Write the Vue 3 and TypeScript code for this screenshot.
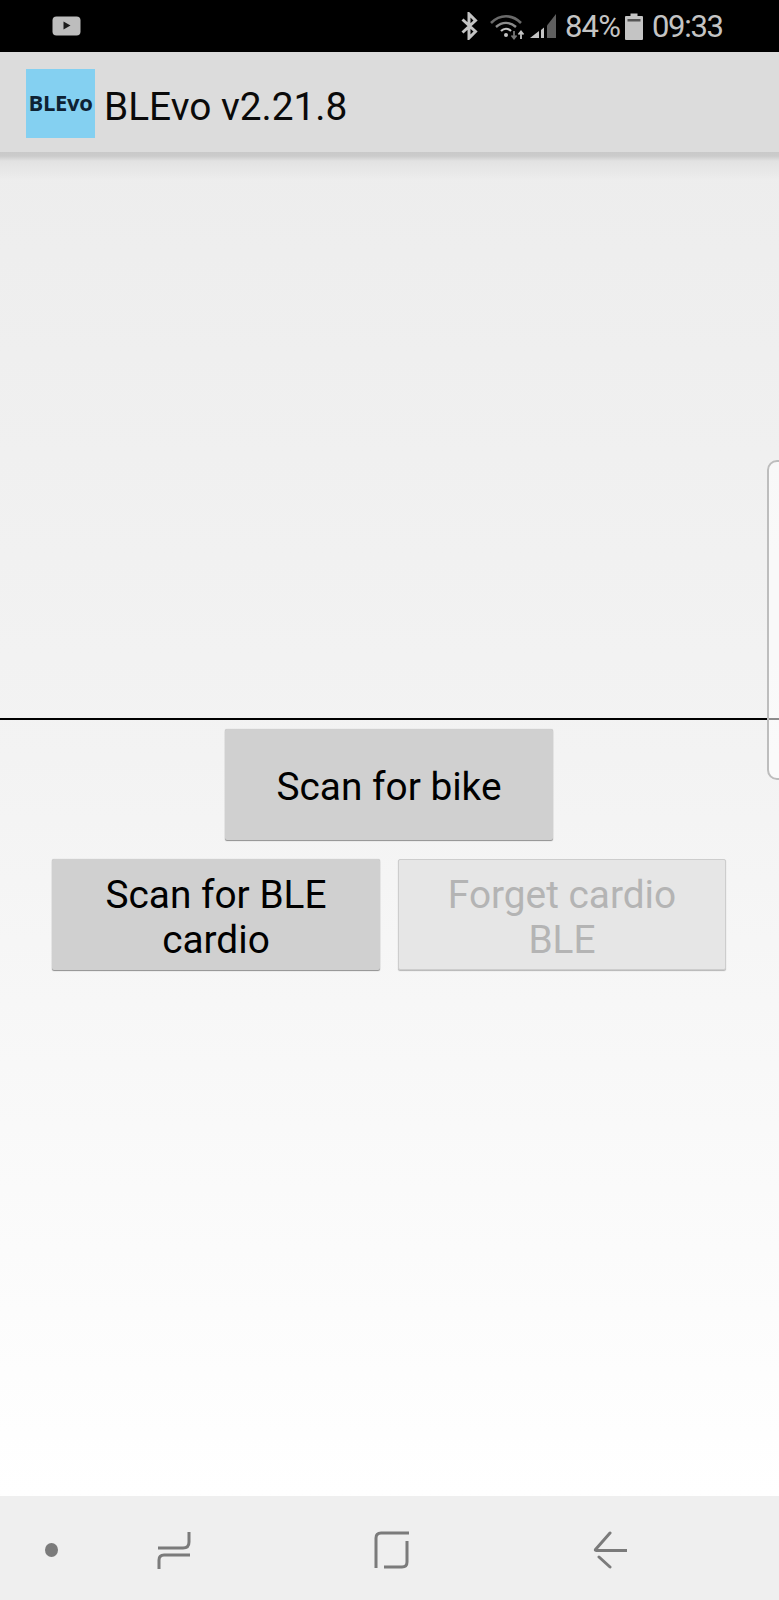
<template>
  <div class="screen">
    <div class="status-bar">
      <svg class="yt" width="29" height="20" viewBox="0 0 29 20">
        <rect width="28" height="19" x="0.5" y="0.5" rx="4" fill="#bdbdbd" />
        <path d="M11.5 5.5 L18.5 9.5 L11.5 13.5 Z" fill="#1c1c1c" />
      </svg>
      <div class="status-right">
        <svg class="bt" width="19" height="28" viewBox="0 0 18 28">
          <path d="M2 7.5 L15 19.5 L8.5 26 V2 L15 8.5 L2 20.5" fill="none" stroke="#c4c4c4" stroke-width="3" />
        </svg>
        <svg class="wifi" width="36" height="28" viewBox="0 0 36 28">
          <path d="M1 11 C10 2 22 2 31 11" fill="none" stroke="#6a6a6a" stroke-width="2.6" />
          <path d="M6 15 C12 9.5 20 9.5 26 15" fill="none" stroke="#8c8c8c" stroke-width="2.4" />
          <path d="M11 19 C14 16 18 16 21 19" fill="none" stroke="#c4c4c4" stroke-width="2.2" />
          <circle cx="16" cy="23" r="2" fill="#c4c4c4" />
          <path d="M24 19 V26 M21.5 23.5 L24 26.5 L26.5 23.5" fill="none" stroke="#777" stroke-width="1.8" />
          <path d="M31 27 V20 M28.5 22.5 L31 19.5 L33.5 22.5" fill="none" stroke="#c4c4c4" stroke-width="1.8" />
        </svg>
        <svg class="signal" width="27" height="27" viewBox="0 0 27 27">
          <path d="M0 26 L9 19 V26 Z" fill="#c4c4c4" />
          <path d="M11 18 L14 15.5 V26 H11 Z" fill="#c4c4c4" />
          <path d="M17 13.5 L26 2 V26 H17 Z" fill="#5f5f5f" />
        </svg>
        <span class="pct">84%</span>
        <svg class="battery" width="18" height="27" viewBox="0 0 18 27">
          <path d="M5.5 0.5 H12.5 V3 H17 Q18 3 18 4 V26 Q18 27 17 27 H1 Q0 27 0 26 V4 Q0 3 1 3 H5.5 Z" fill="#c4c4c4" />
          <rect x="2.5" y="6" width="13" height="2.5" fill="#555" />
        </svg>
        <span class="time">09:33</span>
      </div>
    </div>

    <header class="app-bar">
      <div class="logo">BLEvo</div>
      <span class="title">{{ title }}</span>
    </header>

    <main class="content">
      <div class="graph-area"></div>
      <div class="divider"></div>
      <div class="buttons">
        <button class="btn" type="button">Scan for bike</button>
        <div class="btn-row">
          <button class="btn" type="button">Scan for BLE cardio</button>
          <button class="btn" type="button" disabled>Forget cardio BLE</button>
        </div>
      </div>
      <div class="edge-handle"></div>
    </main>

    <nav class="nav-bar">
      <span class="dot"></span>
      <svg class="recent" width="34" height="38" viewBox="0 0 34 38">
        <path d="M1 17 H26 Q32 17 32 11 V1" fill="none" stroke="#7b7b7b" stroke-width="3" />
        <path d="M33 24 H7 Q2 24 2 29 V38" fill="none" stroke="#7b7b7b" stroke-width="3" />
      </svg>
      <svg class="home" width="36" height="38" viewBox="0 0 36 38">
        <path d="M35 2 H7 Q2 2 2 7 V37" fill="none" stroke="#7b7b7b" stroke-width="3" />
        <path d="M33 10 V31 Q33 36 28 36 H10" fill="none" stroke="#7b7b7b" stroke-width="3" />
      </svg>
      <svg class="back" width="34" height="38" viewBox="0 0 34 38">
        <path d="M17 2 L2.5 18.5 Q2 19.5 3.5 19.5 H33.5" fill="none" stroke="#7b7b7b" stroke-width="3" stroke-linecap="round" stroke-linejoin="round" />
        <path d="M6 26 L17 36" fill="none" stroke="#7b7b7b" stroke-width="3" stroke-linecap="round" />
      </svg>
    </nav>
  </div>
</template>

<script setup lang="ts">
const title = 'BLEvo v2.21.8'
</script>

<style>
html,
body {
  margin: 0;
  background: #fff;
}
</style>

<style scoped>
.screen {
  width: 779px;
  height: 1600px;
  display: flex;
  flex-direction: column;
  font-family: Roboto, "Liberation Sans", sans-serif;
  overflow: hidden;
}

.status-bar {
  height: 52px;
  flex: none;
  background: #000;
  display: flex;
  align-items: center;
  justify-content: space-between;
  padding: 0 57px 0 52px;
  color: #c4c4c4;
}

.yt {
  margin-bottom: 1px;
}

.status-right {
  display: flex;
  align-items: center;
}

.bt {
  margin-right: 11px;
}

.wifi {
  margin-right: 4px;
}

.signal {
  margin-right: 8px;
  margin-bottom: 1px;
}

.pct {
  font-size: 31px;
  letter-spacing: -0.8px;
  width: 60px;
}

.battery {
  margin-right: 9px;
}

.time {
  font-size: 31px;
  letter-spacing: -1.3px;
  width: 70px;
  white-space: nowrap;
}

.app-bar {
  height: 100px;
  flex: none;
  box-sizing: border-box;
  padding: 2px 0 0 26px;
  background: #dcdcdc;
  display: flex;
  align-items: center;
  gap: 9px;
  position: relative;
  z-index: 1;
}

.app-bar::after {
  content: "";
  position: absolute;
  top: 100%;
  left: 0;
  right: 0;
  height: 28px;
  background: linear-gradient(180deg, #c9c9c9 0, #cbcbcb 4px, #e2e2e2 9px, rgba(237, 237, 237, 0) 28px);
}

.logo {
  width: 69px;
  height: 69px;
  padding-bottom: 3px;
  box-sizing: border-box;
  background: #84d0f1;
  color: #0e2233;
  font-family: "Open Sans", sans-serif;
  font-weight: 700;
  font-size: 22px;
  display: flex;
  align-items: center;
  justify-content: center;
  letter-spacing: -0.3px;
}

.title {
  font-size: 38.8px;
  padding-top: 6px;
  color: #0a0a0a;
}

.content {
  flex: 1;
  position: relative;
  display: flex;
  flex-direction: column;
  background: linear-gradient(180deg, #ededed 0%, #f3f3f3 45%, #ffffff 100%);
}

.graph-area {
  height: 566px;
  flex: none;
}

.divider {
  height: 2px;
  flex: none;
  background: #000;
}

.buttons {
  display: flex;
  flex-direction: column;
  align-items: center;
  gap: 19px;
  padding: 9px 1px 0 0;
}

.btn-row {
  display: flex;
  gap: 18px;
}

.btn {
  width: 328px;
  height: 111px;
  padding: 4px 24px 0;
  border: none;
  border-radius: 2px;
  background: #d0d0d0;
  box-shadow: 0 1px 1px #8f8f8f, 0 0 1px #bbb;
  color: #000;
  font-family: inherit;
  font-size: 38.8px;
  line-height: 45px;
  text-align: center;
}

.btn:disabled {
  box-sizing: border-box;
  background: #e6e6e6;
  color: #b4b4b4;
  border: 1px solid #cdcdcd;
  box-shadow: 0 1px 1px #b5b5b5;
}

.edge-handle {
  position: absolute;
  top: 308px;
  right: -13px;
  width: 21px;
  height: 316px;
  border: 2px solid #bdbdbd;
  border-radius: 10px;
  background: rgba(255, 255, 255, 0.55);
}

.nav-bar {
  height: 104px;
  flex: none;
  box-sizing: border-box;
  padding-top: 3px;
  background: #efefef;
  display: flex;
  align-items: center;
  position: relative;
}

.dot {
  width: 13px;
  height: 14px;
  border-radius: 50%;
  background: #7b7b7b;
  margin-left: 45px;
}

.recent {
  margin-left: 99px;
}

.home {
  margin-left: 183px;
}

.back {
  margin-left: 183px;
}
</style>
